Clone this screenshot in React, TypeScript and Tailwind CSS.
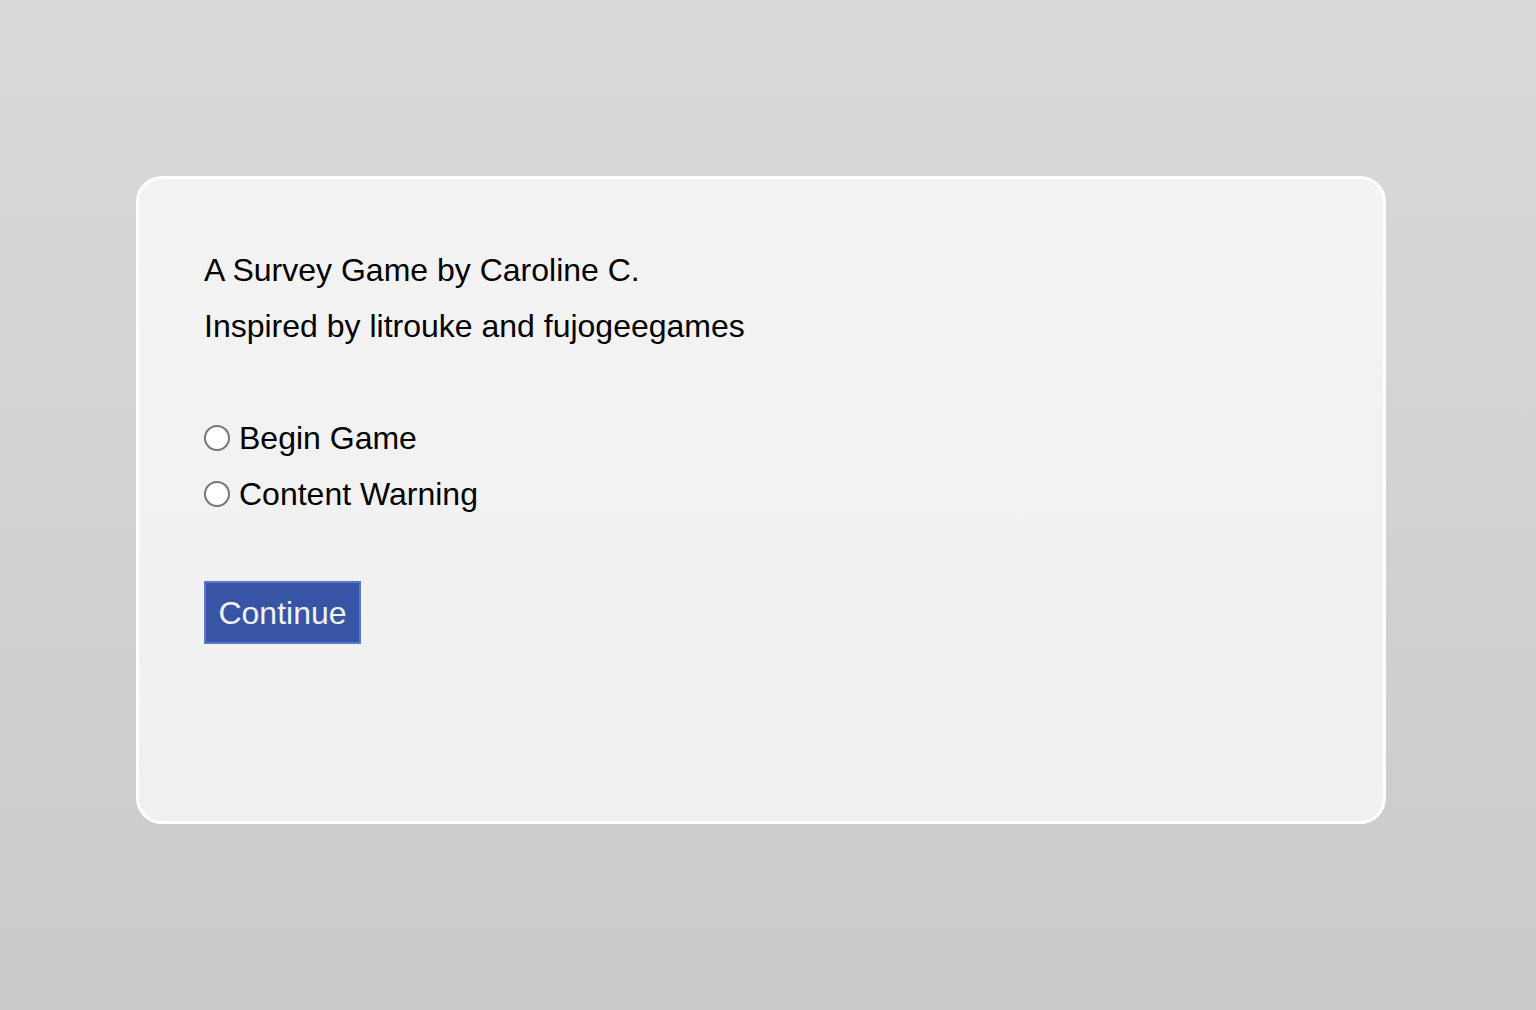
import { useState } from "react";

const options = ["Begin Game", "Content Warning"];

export default function App() {
  const [choice, setChoice] = useState<string | null>(null);

  return (
    <main
      className="min-h-screen w-full bg-gradient-to-b from-[#dadada] to-[#cacaca] pt-[176px] pl-[136px] text-black"
      style={{ fontFamily: '"Liberation Sans", Arial, sans-serif' }}
    >
      <div className="w-[1250px] h-[648px] rounded-[26px] border-[3px] border-white bg-gradient-to-b from-[#f3f3f3] to-[#f0f0f0] pl-[65px] pt-[63px]">
        <p className="text-[32px] leading-[56px]">A Survey Game by Caroline C.</p>
        <p className="text-[32px] leading-[56px]">Inspired by litrouke and fujogeegames</p>

        <div className="mt-[56px] flex flex-col">
          {options.map((opt) => (
            <label
              key={opt}
              className="flex h-[56px] items-center gap-[9px] text-[32px] cursor-pointer"
              onClick={() => setChoice(opt)}
            >
              <span className="flex h-[26px] w-[26px] items-center justify-center rounded-full border-2 border-[#767676] bg-white">
                {choice === opt && <span className="h-[14px] w-[14px] rounded-full bg-[#3a56a6]" />}
              </span>
              <span>{opt}</span>
            </label>
          ))}
        </div>

        <button className="mt-[59px] flex h-[63px] w-[157px] items-center justify-center border-2 border-[#5878cc] bg-[#3855a5] text-[32px] text-[#f2f2f2]">
          Continue
        </button>
      </div>
    </main>
  );
}
